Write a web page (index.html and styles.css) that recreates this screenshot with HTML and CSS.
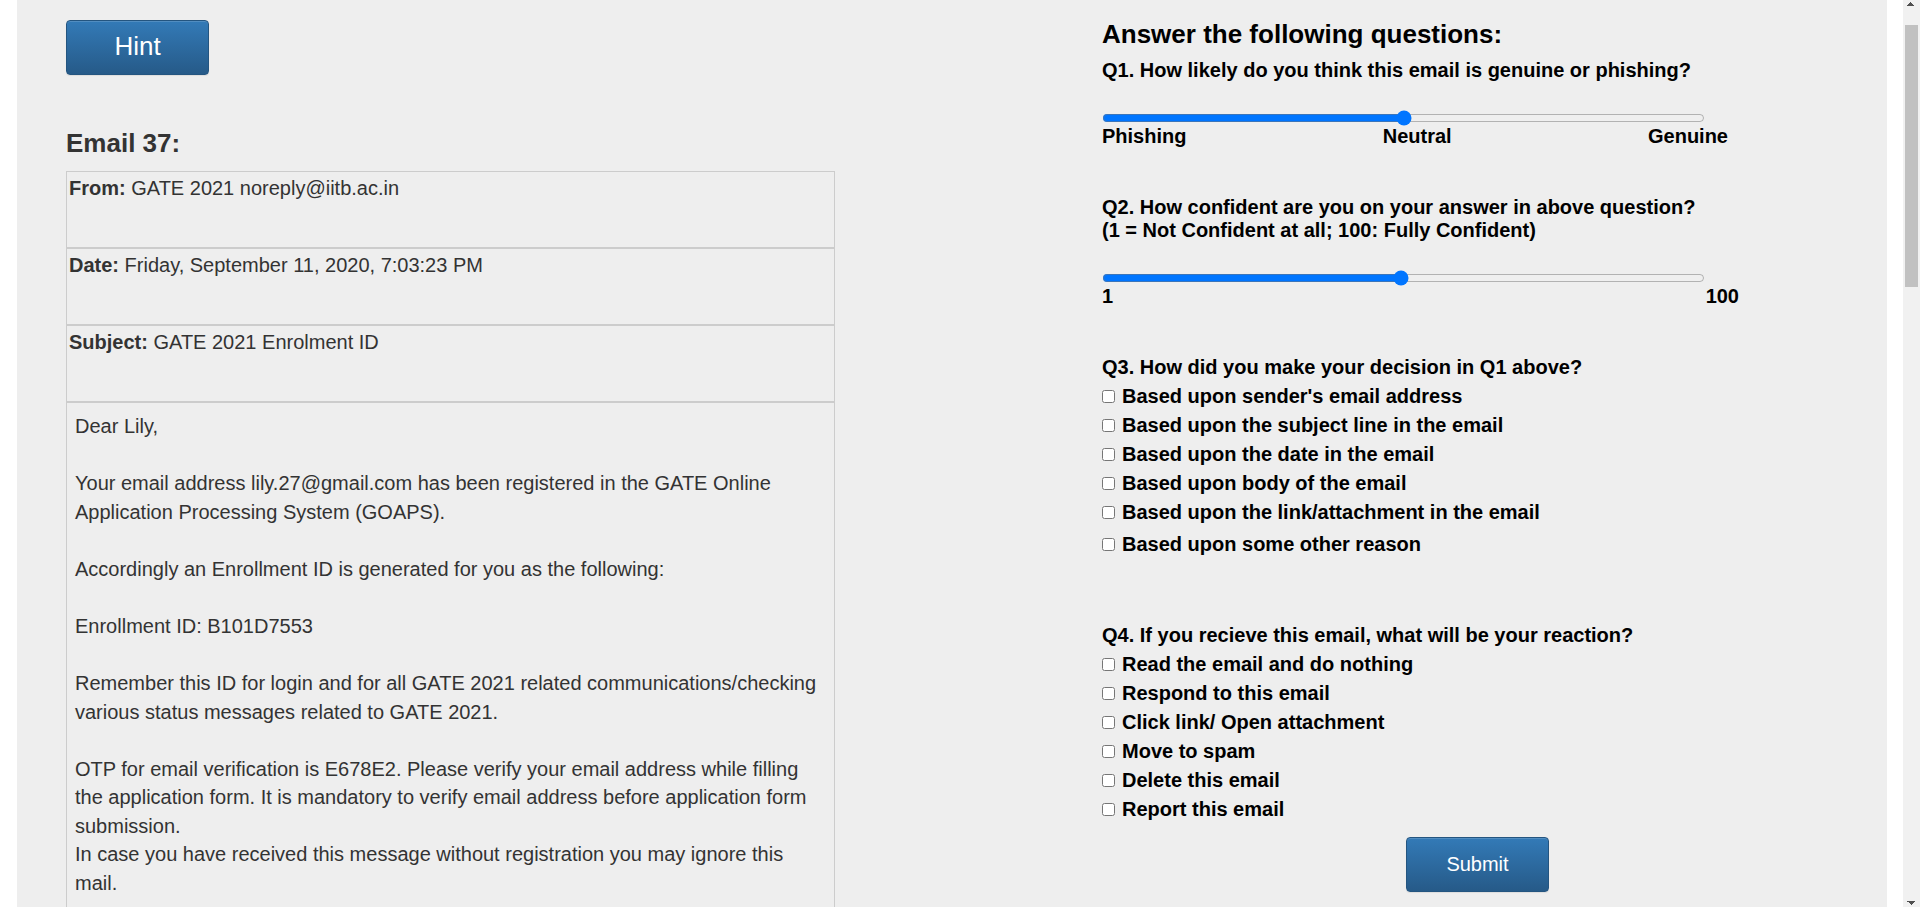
FILE: index.html
```html
<!DOCTYPE html>
<html lang="en">
<head>
<meta charset="utf-8">
<title>Email 37</title>
<link rel="stylesheet" href="styles.css">
</head>
<body>
<div class="window">
<div class="viewport">
<div class="page">
  <div class="left">
    <button class="btn btn-hint" type="button">Hint</button>
    <h4 class="email-title">Email 37:</h4>
    <div class="email">
      <div class="field"><b>From:</b> GATE 2021 noreply@iitb.ac.in</div>
      <div class="field"><b>Date:</b> Friday, September 11, 2020, 7:03:23 PM</div>
      <div class="field"><b>Subject:</b> GATE 2021 Enrolment ID</div>
      <div class="body">Dear Lily,<br><br>Your email address lily.27@gmail.com has been registered in the GATE Online Application Processing System (GOAPS).<br><br>Accordingly an Enrollment ID is generated for you as the following:<br><br>Enrollment ID: B101D7553<br><br>Remember this ID for login and for all GATE 2021 related communications/checking various status messages related to GATE 2021.<br><br>OTP for email verification is E678E2. Please verify your email address while filling the application form. It is mandatory to verify email address before application form submission.<br>In case you have received this message without registration you may ignore this mail.</div>
    </div>
  </div>
  <form class="right">
    <h3 class="q-title">Answer the following questions:</h3>
    <div class="q first">Q1. How likely do you think this email is genuine or phishing?</div>
    <input class="slider" type="range" min="0" max="100" value="50">
    <div class="scale scale-1"><span>Phishing</span><span>Neutral</span><span>Genuine</span></div>
    <div class="q gap">Q2. How confident are you on your answer in above question?<br>(1 = Not Confident at all; 100: Fully Confident)</div>
    <input class="slider" type="range" min="1" max="100" value="50">
    <div class="scale scale-2"><span>1</span><span>100</span></div>
    <div class="q gap">Q3. How did you make your decision in Q1 above?</div>
    <label class="opt"><input type="checkbox"><span>Based upon sender's email address</span></label>
    <label class="opt"><input type="checkbox"><span>Based upon the subject line in the email</span></label>
    <label class="opt"><input type="checkbox"><span>Based upon the date in the email</span></label>
    <label class="opt"><input type="checkbox"><span>Based upon body of the email</span></label>
    <label class="opt"><input type="checkbox"><span>Based upon the link/attachment in the email</span></label>
    <label class="opt opt-last"><input type="checkbox"><span>Based upon some other reason</span></label>
    <div class="q gap-lg">Q4. If you recieve this email, what will be your reaction?</div>
    <label class="opt"><input type="checkbox"><span>Read the email and do nothing</span></label>
    <label class="opt"><input type="checkbox"><span>Respond to this email</span></label>
    <label class="opt"><input type="checkbox"><span>Click link/ Open attachment</span></label>
    <label class="opt"><input type="checkbox"><span>Move to spam</span></label>
    <label class="opt"><input type="checkbox"><span>Delete this email</span></label>
    <label class="opt"><input type="checkbox"><span>Report this email</span></label>
    <div class="submit-row"><button class="btn btn-submit" type="button">Submit</button></div>
  </form>
</div>
</div>
<div class="scrollbar" aria-hidden="true">
  <div class="sb-btn sb-up"></div>
  <div class="sb-track"><div class="sb-thumb"></div></div>
  <div class="sb-btn sb-down"></div>
</div>
</div>
</body>
</html>
```
FILE: styles.css
```css
html, body {
  margin: 0;
  padding: 0;
  height: 100%;
  overflow: hidden;
  background: #ffffff;
}
body {
  font-family: "Liberation Sans", Arial, Helvetica, sans-serif;
  font-size: 20px;
  color: #333333;
}
.window {
  display: flex;
  height: 100vh;
}
.viewport {
  flex: 1;
  height: 100%;
  overflow: hidden;
  background: #ffffff;
}
.scrollbar {
  flex: none;
  display: flex;
  flex-direction: column;
  width: 17px;
  height: 100%;
  background: #f1f1f1;
}
.sb-btn {
  flex: none;
  height: 17px;
  background-repeat: no-repeat;
  background-size: 4px 4px;
}
.sb-up {
  background-image: linear-gradient(to bottom right, transparent 50%, #505050 50%), linear-gradient(to bottom left, transparent 50%, #505050 50%);
  background-position: 4px 2px, 8px 2px;
}
.sb-down {
  background-image: linear-gradient(to top right, transparent 50%, #505050 50%), linear-gradient(to top left, transparent 50%, #505050 50%);
  background-position: 4px 11px, 8px 11px;
}
.sb-track {
  flex: 1;
  padding-top: 8px;
}
.sb-thumb {
  height: 262px;
  margin: 0 2px;
  background: #c1c1c1;
}
.page {
  display: flex;
  align-items: flex-start;
  margin-left: 17px;
  width: 1870px;
  min-height: 3022px;
  background: #eeeeee;
}
.left {
  width: 769px;
  margin-left: 49px;
  padding-top: 20px;
}
.btn {
  display: block;
  box-sizing: border-box;
  width: 143px;
  height: 55px;
  padding: 0;
  border: 1px solid #245580;
  border-radius: 4px;
  background: linear-gradient(to bottom, #337ab7 0%, #265a88 100%);
  color: #ffffff;
  font-family: "Liberation Sans", Arial, Helvetica, sans-serif;
  text-align: center;
  box-shadow: inset 0 1px 0 rgba(255, 255, 255, 0.15), 0 1px 1px rgba(0, 0, 0, 0.075);
}
.btn-hint {
  font-size: 26px;
  line-height: 50px;
  padding-bottom: 3px;
}
.btn-submit {
  font-size: 20px;
  line-height: 53px;
}
.email-title {
  margin: 53px 0 12px;
  font-size: 26px;
  font-weight: bold;
  line-height: normal;
  color: #333333;
}
.email {
  line-height: 28.57px;
  color: #333333;
}
.field {
  box-sizing: border-box;
  height: 77px;
  padding: 2px;
  border: 1px solid #cccccc;
}
.body {
  min-height: 700px;
  padding: 9px 8px;
  border: 1px solid #cccccc;
}
.right {
  width: 751px;
  margin: 0 0 0 267px;
  padding-top: 19px;
  color: #000000;
  font-weight: bold;
  line-height: 23px;
}
.q-title {
  margin: 0;
  font-size: 26px;
  line-height: normal;
}
.q.first {
  margin-top: 9px;
}
.q.gap {
  margin-top: 48px;
}
.q.gap-lg {
  margin-top: 68px;
}
.slider {
  display: block;
  width: 603px;
  height: 16px;
  margin: 28px 0 0;
  accent-color: #0075ff;
}
.scale {
  display: flex;
  justify-content: space-between;
  margin-top: -1px;
}
.scale-1 {
  width: 626px;
}
.scale-2 {
  width: 637px;
}
.opt {
  display: flex;
  align-items: center;
  gap: 7px;
  margin-top: 6px;
}
.opt-last {
  margin-top: 9px;
}
.opt input {
  width: 13px;
  height: 13px;
  margin: 0;
  flex: none;
}
.submit-row {
  display: flex;
  justify-content: center;
  margin-top: 16px;
}
```
